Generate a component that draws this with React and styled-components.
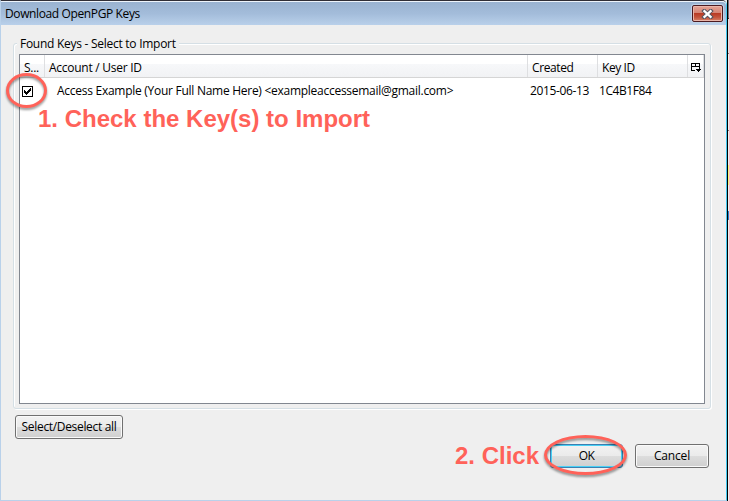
import React from "react";
import styled, { createGlobalStyle } from "styled-components";

const GlobalStyle = createGlobalStyle`
  * { box-sizing: border-box; }
  body { margin: 0; overflow: hidden; background: #fff; }
`;

const Desktop = styled.div`
  position: relative;
  display: flex;
  width: 729px;
  height: 501px;
  overflow: hidden;
  background: #efefef;
  font-family: "Open Sans", "Noto Sans", sans-serif;
  font-size: 12px;
  line-height: 16px;
  color: #000;
`;

const Dialog = styled.main`
  display: flex;
  flex-direction: column;
  width: 727px;
  height: 501px;
  border: 1px solid;
  border-color: #302e36 #43c9ef #b9d1ea #b9d1ea;
  border-top-right-radius: 5px;
  background: #efefef;
`;

const Backdrop = styled.div`
  width: 2px;
  height: 501px;
  border-left: 1px solid #000;
  background: linear-gradient(
    #77757c 0 18px, #333 18px 19px, #e3e3e3 19px 53px, #777 53px 54px,
    #efefef 54px 130px, #777 130px 131px, #efefef 131px 165px,
    #f6f57b 165px 185px, #efefef 185px 211px, #2f83cb 211px 220px, #efefef 220px
  );
`;

const TitleBar = styled.header`
  display: flex;
  flex: none;
  justify-content: space-between;
  height: 24px;
  padding: 0 3px 0 4px;
  border-top: 1px solid #eef4fb;
  border-top-right-radius: 4px;
  background: linear-gradient(#9ab3d1, #a3bcda 50%, #b9d0ea);
`;

const Text = styled.span`
  display: inline-block;
  flex: none;
  white-space: pre;
  letter-spacing: ${(p) => p.$ls || 0}px;
`;

const Title = styled.h1`
  margin: 4px 0 0;
  font: inherit;
`;

const CloseButton = styled.button`
  display: flex;
  align-items: center;
  justify-content: center;
  width: 31px;
  height: 17px;
  margin-top: 3px;
  padding: 0;
  border: 1px solid #4c1a20;
  border-radius: 2px;
  background: linear-gradient(#e5a497, #d58474 46%, #b93b25 50%, #c4543c 75%, #d98369);
  box-shadow: inset 0 0 0 1px #eab5a9, 0 0 0 1px #bfd2e7;
`;

const Body = styled.section`
  display: flex;
  flex-direction: column;
  flex: 1;
  padding: 11px 13px 0 12px;
`;

const KeyGroup = styled.fieldset`
  display: flex;
  flex-direction: column;
  width: 698px;
  height: 373px;
  min-width: 0;
  margin: 0;
  padding: 0;
  border: 0;
`;

const Legend = styled.div`
  position: relative;
  align-self: flex-start;
  height: 16px;
  margin-left: 4px;
  padding: 0 3px;
  background: #efefef;
`;

const GroupFrame = styled.div`
  height: 366px;
  margin-top: -9px;
  padding: 10px 5px 4px 5px;
  border: 1px solid #d5dfe5;
  border-radius: 3px;
  box-shadow: inset 1px 1px #fff, 1px 1px #fff;
`;

const Table = styled.div`
  height: 350px;
  width: 686px;
  border: 1px solid #828790;
  background: #fff;
`;

const HeadRow = styled.div`
  display: grid;
  grid-template-columns: 25px 483px 70px 90px 16px;
  height: 23px;
  border-bottom: 1px solid #d5d5d5;
  background: linear-gradient(#fff 0 9px, #f7f8fa 9px, #f1f2f4);
`;

const HeadCell = styled.div`
  display: flex;
  align-items: center;
  padding-left: ${(p) => p.$pad ?? 4}px;
  padding-top: 3px;
  border-right: 1px solid #dedfe1;
`;

const KeyRow = styled.div`
  display: grid;
  grid-template-columns: 37px 473px 69px 90px;
  align-items: center;
  height: 26px;
`;

const CheckBox = styled.span`
  display: flex;
  width: 11px;
  height: 11px;
  margin-left: 2px;
`;

const ButtonRow = styled.div`
  display: flex;
  justify-content: ${(p) => (p.$end ? "flex-end" : "flex-start")};
  gap: 12px;
  margin-top: ${(p) => p.$top}px;
  padding: 0 4px 0 2px;
`;

const PushButton = styled.button`
  display: flex;
  align-items: center;
  justify-content: center;
  width: ${(p) => p.$w}px;
  height: 24px;
  padding: 0;
  border: 1px solid ${(p) => (p.$primary ? "#3c7fb1" : "#707070")};
  border-radius: 3px;
  background: linear-gradient(#f2f2f2, #ebebeb 48%, #dddddd 50%, #cfcfcf);
  box-shadow: inset 0 0 0 1px ${(p) => (p.$primary ? "#48d0f5" : "#fafafa")};
  font: inherit;
  color: #000;
`;

const Note = styled.div`
  position: absolute;
  left: ${(p) => p.$x}px;
  top: ${(p) => p.$y}px;
  color: #ff6259;
  font: bold 24px/28px "Liberation Sans", Arial, sans-serif;
  white-space: pre;
`;

const Ring = styled.div`
  position: absolute;
  left: ${(p) => p.$x}px;
  top: ${(p) => p.$y}px;
  width: ${(p) => p.$w}px;
  height: ${(p) => p.$h}px;
  border: 3px solid #ff6259;
  border-radius: 50%;
  filter: drop-shadow(0 2px 1px rgba(0, 0, 0, 0.4));
`;

const CloseIcon = () => (
  <svg width="13" height="10" viewBox="0 0 13 10">
    <path d="M3.3 2 9.7 8M9.7 2 3.3 8" stroke="#555561" strokeWidth="4.2" strokeLinecap="square" />
    <path d="M3.4 2.1 9.6 7.9M9.6 2.1 3.4 7.9" stroke="#fff" strokeWidth="2.2" strokeLinecap="square" />
  </svg>
);

const PickerIcon = () => (
  <svg width="11" height="10" viewBox="0 0 11 10" shapeRendering="crispEdges">
    <path d="M0 0h9v1H0zM0 3h9v1H0zM0 0h1v8H0zM4 0h1v4H4zM8 0h1v6H8zM0 7h4v1H0zM5 6h5v1H5zM6 7h3v1H6zM7 8h1v1H7z" />
  </svg>
);

const CheckedIcon = () => (
  <svg width="11" height="11" viewBox="0 0 11 11" shapeRendering="crispEdges">
    <path d="M.5.5h10v10H.5z" fill="#fff" stroke="#000" />
    <path d="M2 4h1v3H2zM3 5h1v3H3zM4 6h1v3H4zM5 5h1v3H5zM6 4h1v3H6zM7 3h1v3H7zM8 2h1v3H8z" />
  </svg>
);

export default function App() {
  return (
    <>
      <GlobalStyle />
      <Desktop>
        <Dialog>
          <TitleBar>
            <Title><Text $ls={-0.38}>Download OpenPGP Keys</Text></Title>
            <CloseButton aria-label="Close"><CloseIcon /></CloseButton>
          </TitleBar>
          <Body>
            <KeyGroup>
              <Legend><Text $ls={-0.27}>Found Keys - Select to Import</Text></Legend>
              <GroupFrame>
                <Table>
                  <HeadRow>
                    <HeadCell><Text $ls={-0.3}>S...</Text></HeadCell>
                    <HeadCell><Text $ls={-0.26}>Account / User ID</Text></HeadCell>
                    <HeadCell><Text $ls={-0.4}>Created</Text></HeadCell>
                    <HeadCell><Text $ls={-0.4}>Key ID</Text></HeadCell>
                    <HeadCell $pad={3}><PickerIcon /></HeadCell>
                  </HeadRow>
                  <KeyRow>
                    <CheckBox role="checkbox" aria-checked="true"><CheckedIcon /></CheckBox>
                    <Text $ls={-0.27}>{"Access Example (Your Full Name Here) <exampleaccessemail@gmail.com>"}</Text>
                    <Text $ls={-0.35}>2015-06-13</Text>
                    <Text $ls={-0.42}>1C4B1F84</Text>
                  </KeyRow>
                </Table>
              </GroupFrame>
            </KeyGroup>
            <ButtonRow $top={6}>
              <PushButton $w={108}><Text $ls={-0.33}>Select/Deselect all</Text></PushButton>
            </ButtonRow>
            <ButtonRow $end $top={5}>
              <PushButton $w={73} $primary><Text $ls={-0.5}>OK</Text></PushButton>
              <PushButton $w={74}><Text $ls={-0.16}>Cancel</Text></PushButton>
            </ButtonRow>
          </Body>
        </Dialog>
        <Backdrop />
        <Note $x={38} $y={105}>1. Check the Key(s) to Import</Note>
        <Note $x={455} $y={442}>2. Click</Note>
        <Ring $x={6} $y={73} $w={41} $h={35} />
        <Ring $x={544} $y={435} $w={83} $h={40} />
      </Desktop>
    </>
  );
}
